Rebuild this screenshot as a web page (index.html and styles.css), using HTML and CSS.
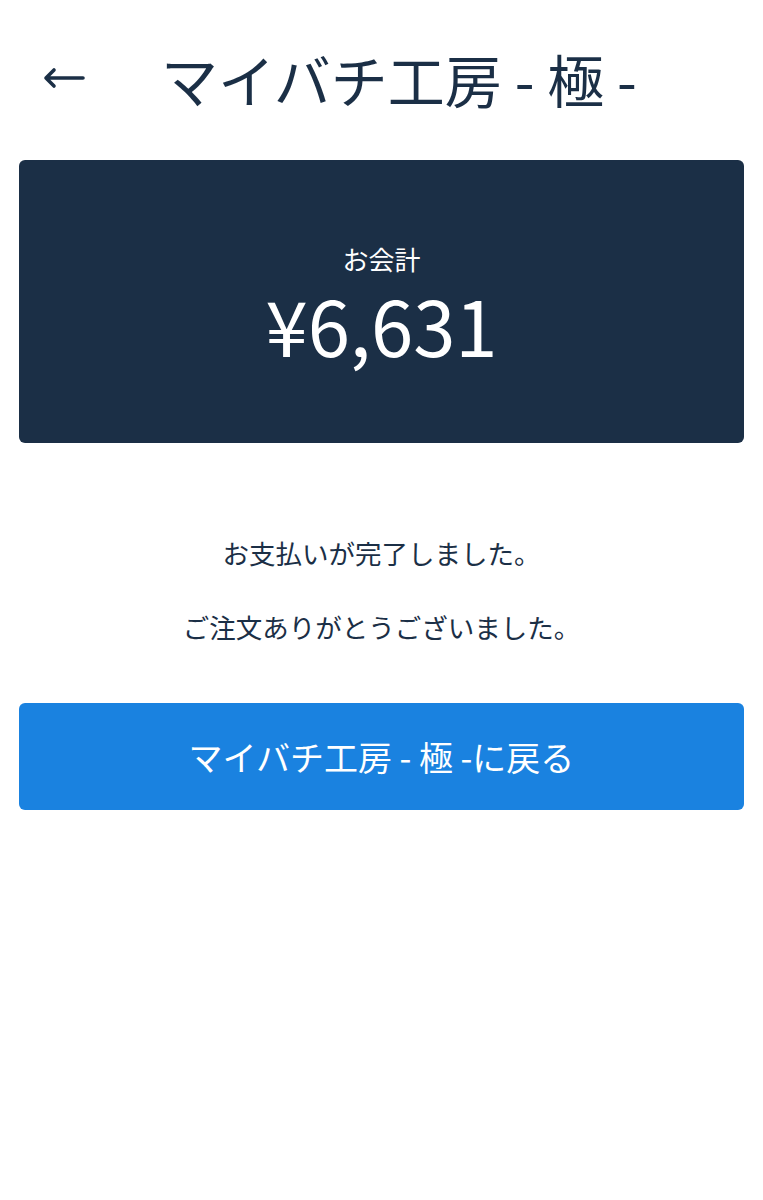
FILE: index.html
```html
<!DOCTYPE html>
<html lang="ja">
<head>
  <meta charset="UTF-8">
  <meta name="viewport" content="width=device-width, initial-scale=1.0"/>
  <title>お支払い完了</title>
  <link rel="stylesheet" href="styles.css">
</head>
<body>
  <div class="header">
    <a class="back" href="#">
      <svg width="44" height="28" viewBox="0 0 44 28" fill="none" stroke="#1b2f46" stroke-width="3.6" stroke-linecap="round" stroke-linejoin="round">
        <path d="M41 14H4M12 6L4 14l8 8"/>
      </svg>
    </a>
    <h1 class="title">マイバチ工房 - 極 -</h1>
  </div>

  <div class="total">
    <div class="total-label">お会計</div>
    <div class="total-amount">¥6,631</div>
  </div>

  <div class="message">
    <p>お支払いが完了しました。</p>
    <p>ご注文ありがとうございました。</p>
  </div>

  <a class="return-btn" href="#">マイバチ工房 - 極 -に戻る</a>
</body>
</html>
```

FILE: styles.css
```css
body {
  margin: 0;
  font-family: "Noto Sans CJK JP", "Noto Sans", sans-serif;
  color: #1b2f46;
  background: #fff;
}
.header {
  height: 156px;
  display: flex;
  align-items: center;
  padding: 0 42px;
}
.back {
  display: flex;
  width: 44px;
  margin-right: 75px;
}
.title {
  margin: 0;
  font-size: 57px;
  font-weight: 400;
  line-height: 1.2;
}
.total {
  margin: 4px 19px 0;
  background: #1b2f46;
  border-radius: 6px;
  color: #fff;
  text-align: center;
  padding: 81px 0 72px;
}
.total-label {
  font-size: 26px;
  line-height: 36px;
}
.total-amount {
  font-size: 76px;
  line-height: 94px;
}
.message {
  margin-top: 92px;
  text-align: center;
  font-size: 26.5px;
  line-height: 36px;
}
.message p {
  margin: 0 0 38px;
}
.message p:last-child {
  margin-bottom: 0;
}
.return-btn {
  display: flex;
  align-items: center;
  justify-content: center;
  margin: 58px 19px 0;
  height: 107px;
  background: #1a82e0;
  border-radius: 6px;
  color: #fff;
  font-size: 34px;
  text-decoration: none;
}
```
